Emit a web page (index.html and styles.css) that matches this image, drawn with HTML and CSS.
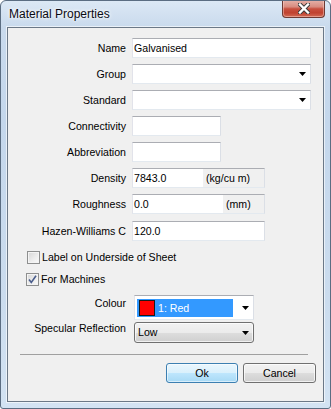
FILE: index.html
```html
<!DOCTYPE html>
<html>
<head>
<meta charset="utf-8">
<link rel="stylesheet" href="styles.css">
</head>
<body>
<div class="window">
  <div class="titlebar">
    <span class="title">Material Properties</span>
    <div class="close">
      <svg width="12" height="11" viewBox="0 0 12 11">
        <path d="M2 1.5L10 9.5M10 1.5L2 9.5" stroke="#3b3b3b" stroke-width="4.2" stroke-linecap="square"/>
        <path d="M2 1.5L10 9.5M10 1.5L2 9.5" stroke="#ffffff" stroke-width="2.4" stroke-linecap="square"/>
      </svg>
    </div>
  </div>
  <div class="client">
    <div class="form">
      <div class="row"><span class="lbl">Name</span><div class="field w-name"><span class="val">Galvanised</span></div></div>
      <div class="row"><span class="lbl">Group</span><div class="field w-name"><span class="val"></span><svg class="arrow" width="7" height="4" viewBox="0 0 7 4"><path d="M0 0h7L3.5 4z"/></svg></div></div>
      <div class="row"><span class="lbl">Standard</span><div class="field w-name"><span class="val"></span><svg class="arrow" width="7" height="4" viewBox="0 0 7 4"><path d="M0 0h7L3.5 4z"/></svg></div></div>
      <div class="row"><span class="lbl">Connectivity</span><div class="field w-short"><span class="val"></span></div></div>
      <div class="row"><span class="lbl">Abbreviation</span><div class="field w-short"><span class="val"></span></div></div>
      <div class="row"><span class="lbl">Density</span><div class="field w-mid"><span class="val v-density">7843.0</span><span class="unit">(kg/cu m)</span></div></div>
      <div class="row"><span class="lbl">Roughness</span><div class="field w-mid"><span class="val v-rough">0.0</span><span class="unit u-mm">(mm)</span></div></div>
      <div class="row row-hazen"><span class="lbl">Hazen-Williams C</span><div class="field w-mid"><span class="val">120.0</span></div></div>
    </div>

    <div class="check check-1">
      <span class="box"></span>
      <span class="ctext">Label on Underside of Sheet</span>
    </div>
    <div class="check check-2">
      <span class="box">
        <svg width="11" height="11" viewBox="0 0 11 11"><path d="M2 5.5L4.3 8.5L9 1.8" fill="none" stroke="#4a5d8c" stroke-width="1.6"/></svg>
      </span>
      <span class="ctext">For Machines</span>
    </div>

    <div class="crow crow-colour">
      <span class="lbl clbl-colour">Colour</span>
      <div class="ccombo">
        <div class="sel"><span class="swatch"></span><span class="seltext">1: Red</span></div>
        <svg class="carrow" width="7" height="4" viewBox="0 0 7 4"><path d="M0 0h7L3.5 4z"/></svg>
      </div>
    </div>
    <div class="crow crow-spec">
      <span class="lbl">Specular Reflection</span>
      <div class="dcombo">
        <span class="dtext">Low</span>
        <svg class="carrow" width="7" height="4" viewBox="0 0 7 4"><path d="M0 0h7L3.5 4z"/></svg>
      </div>
    </div>

    <div class="sep"></div>

    <div class="buttons">
      <div class="btn btn-ok">Ok</div>
      <div class="btn btn-cancel">Cancel</div>
    </div>
  </div>
</div>
</body>
</html>
```

FILE: styles.css
```css
html, body {
  margin: 0;
  padding: 0;
  background: #ffffff;
}

.window {
  width: 331px;
  height: 409px;
  box-sizing: border-box;
  border: 1px solid #5b6d82;
  border-radius: 6px 6px 3px 3px;
  background: linear-gradient(180deg, #dce8f5 0px, #c9daed 26px, #c4d7ec 120px, #cbdcee 300px, #d3e3f3 100%);
  display: flex;
  flex-direction: column;
  font-family: "Liberation Sans", Arial, sans-serif;
  overflow: hidden;
}

.titlebar {
  height: 26px;
  flex: none;
  display: flex;
  align-items: flex-start;
  justify-content: space-between;
}

.title {
  font-size: 12px;
  line-height: 26px;
  padding-left: 8px;
  color: #0a0a14;
  text-shadow: 0 0 5px #ffffff, 0 0 3px #ffffff;
}

.close {
  width: 43px;
  height: 18px;
  margin-top: -1px;
  margin-right: 5px;
  box-sizing: border-box;
  border: 1px solid #6e3a34;
  border-top: none;
  border-radius: 0 0 4px 4px;
  background: linear-gradient(180deg, #e6b3aa 0%, #d88c80 40%, #c8503f 52%, #c04230 75%, #d26a55 100%);
  box-shadow: inset 0 0 0 1px rgba(255, 220, 210, 0.45);
  display: flex;
  align-items: center;
  justify-content: center;
}

.close svg {
  display: block;
  margin-top: 0px;
}

.client {
  flex: 1;
  margin: 0 6px 6px;
  border: 1px solid #6b7887;
  background: #f0f0f0;
  box-shadow: 0 0 0 1px rgba(255, 255, 255, 0.6);
  font-size: 10.6px;
  color: #000;
  display: flex;
  flex-direction: column;
}

.row {
  display: flex;
  align-items: center;
  height: 20px;
  margin-top: 6px;
}

.row:first-child {
  margin-top: 10px;
}

.row-hazen {
  margin-top: 7px;
}

.lbl {
  width: 118px;
  flex: none;
  text-align: right;
  line-height: 13px;
  margin-right: 6px;
  white-space: nowrap;
}

.field {
  height: 20px;
  box-sizing: border-box;
  border: 1px solid;
  border-color: #abadb3 #dbdfe6 #e3e9ef #e2e3ea;
  background: #ffffff;
  display: flex;
  align-items: center;
}

.w-name { width: 179px; }
.w-short { width: 89px; }
.w-mid { width: 133px; }

.val {
  flex: 1;
  padding-left: 1px;
  line-height: 13px;
  white-space: nowrap;
}

.v-density { flex: none; width: 69px; }
.v-rough { flex: none; width: 89px; }

.unit {
  flex: 1;
  align-self: stretch;
  background: #f0f0f0;
  padding-left: 3px;
  line-height: 18px;
  white-space: nowrap;
}

.arrow {
  display: block;
  margin-right: 4px;
  flex: none;
}

.check {
  display: flex;
  align-items: center;
  height: 13px;
}

.check-1 {
  margin-top: 10px;
  margin-left: 19px;
}

.check-2 {
  margin-top: 9px;
  margin-left: 18px;
}

.box {
  width: 13px;
  height: 13px;
  box-sizing: border-box;
  border: 1px solid #8e8f8f;
  background: linear-gradient(135deg, #d6d6d6 0%, #eeeeee 60%, #fafafa 100%);
  box-shadow: inset 0 0 0 1px #f4f4f4;
  display: flex;
  align-items: center;
  justify-content: center;
  flex: none;
}

.box svg {
  display: block;
}

.ctext {
  margin-left: 2px;
  line-height: 13px;
  white-space: nowrap;
}

.crow {
  display: flex;
  align-items: flex-start;
}

.crow .lbl {
  margin-right: 8px;
}

.crow-colour {
  margin-top: 9px;
}

.clbl-colour {
  margin-top: 2px;
}

.crow-spec {
  margin-top: 2px;
}

.ccombo {
  width: 120px;
  height: 25px;
  box-sizing: border-box;
  border: 1px solid;
  border-color: #abadb3 #dbdfe6 #e3e9ef #e2e3ea;
  background: #ffffff;
  display: flex;
  align-items: center;
  justify-content: space-between;
  padding: 1px 4px 0 2px;
}

.sel {
  width: 96px;
  height: 18px;
  background: #3399ff;
  display: flex;
  align-items: center;
}

.swatch {
  width: 16px;
  height: 16px;
  box-sizing: border-box;
  border: 1px solid #1a1a1a;
  background: #ff0000;
  margin-left: 2px;
  flex: none;
}

.seltext {
  color: #ffffff;
  margin-left: 3px;
  line-height: 13px;
  white-space: nowrap;
}

.carrow {
  display: block;
  flex: none;
}

.dcombo {
  width: 120px;
  height: 21px;
  box-sizing: border-box;
  border: 1px solid #707070;
  border-radius: 3px;
  background: linear-gradient(180deg, #f2f2f2 0%, #ebebeb 50%, #dddddd 51%, #cfcfcf 100%);
  box-shadow: inset 0 0 0 1px rgba(255, 255, 255, 0.7);
  display: flex;
  align-items: center;
  justify-content: space-between;
  padding: 0 4px 0 3px;
}

.dtext {
  line-height: 13px;
}

.sep {
  height: 1px;
  background: #a0a0a0;
  margin: 11px 15px 0 12px;
}

.buttons {
  display: flex;
  justify-content: flex-end;
  gap: 5px;
  margin-top: 8px;
  margin-right: 7px;
}

.btn {
  height: 20px;
  box-sizing: border-box;
  border-radius: 3px;
  display: flex;
  align-items: center;
  justify-content: center;
  line-height: 13px;
}

.btn-ok {
  width: 72px;
  border: 1px solid #3c7fb1;
  background: linear-gradient(180deg, #eaf6fd 0%, #d9f0fc 50%, #bee6fd 51%, #a7d9f5 100%);
  box-shadow: inset 0 0 0 1px rgba(255, 255, 255, 0.55);
}

.btn-cancel {
  width: 73px;
  border: 1px solid #707070;
  background: linear-gradient(180deg, #f2f2f2 0%, #ebebeb 50%, #dddddd 51%, #cfcfcf 100%);
  box-shadow: inset 0 0 0 1px rgba(255, 255, 255, 0.7);
}
```
